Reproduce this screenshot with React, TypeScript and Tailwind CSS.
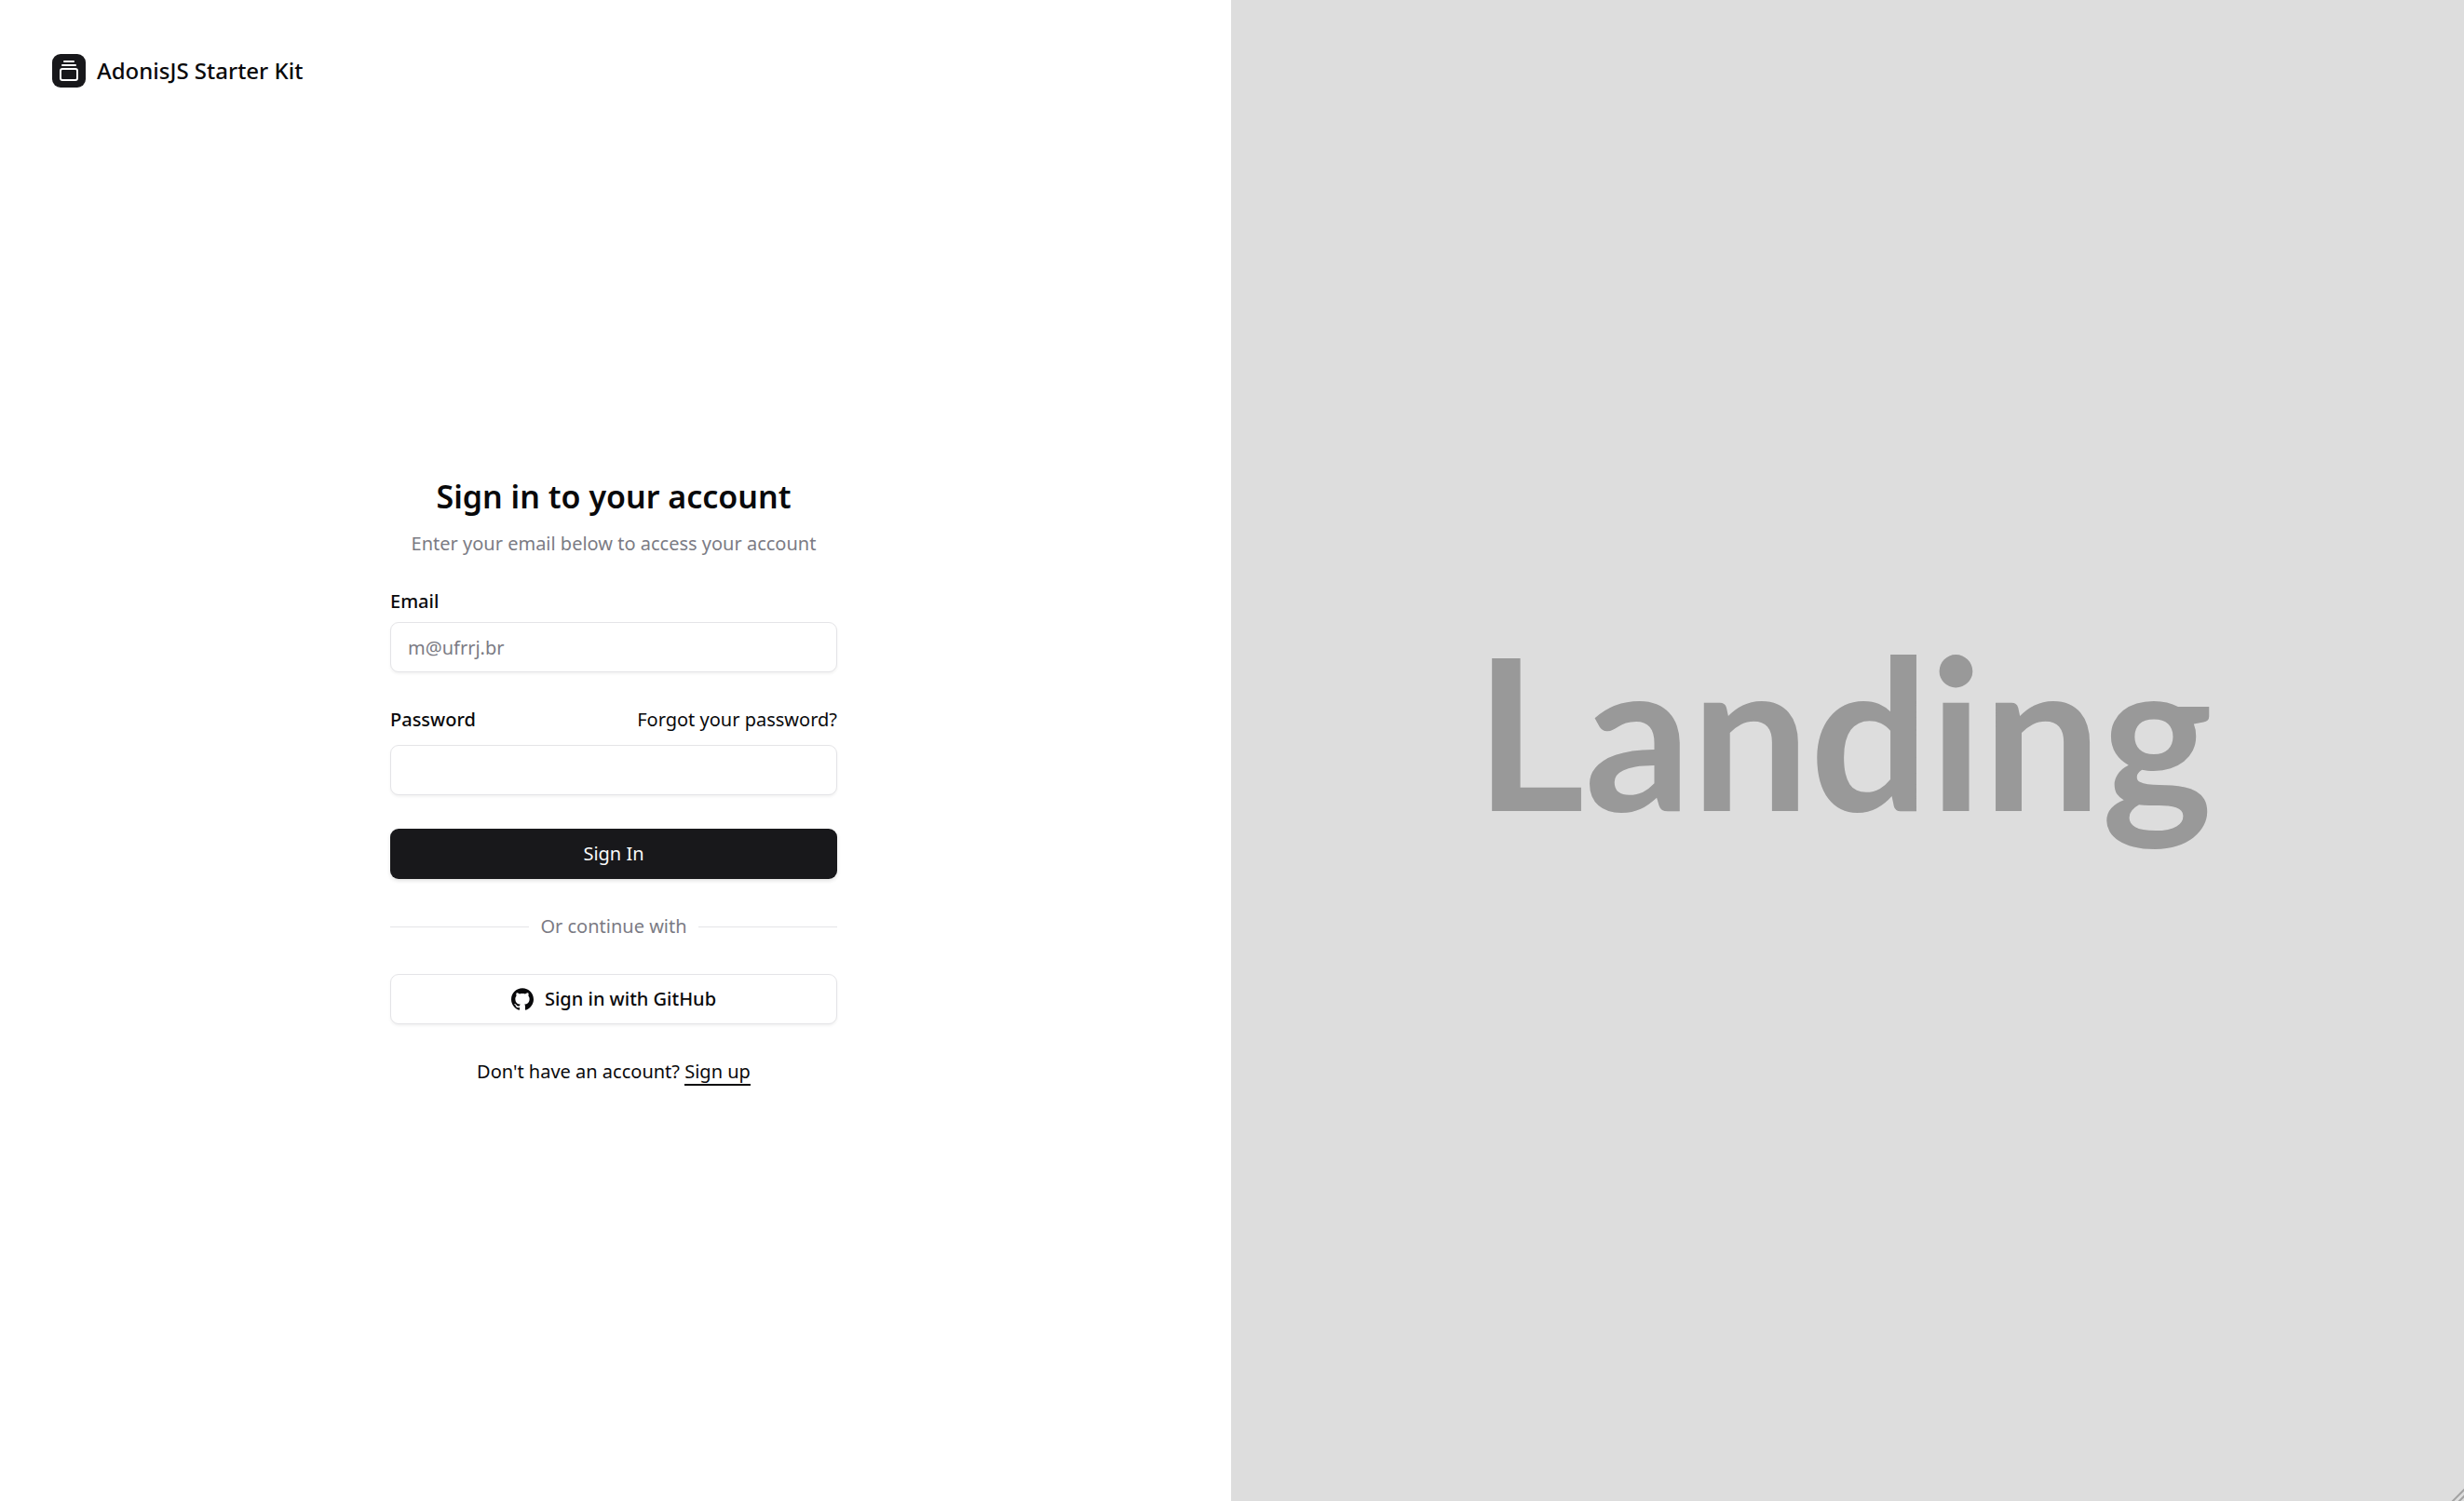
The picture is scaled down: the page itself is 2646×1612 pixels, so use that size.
import React from "react";
import { GalleryVerticalEnd } from "lucide-react";
import { SiGithub } from "react-icons/si";

const field =
  "h-[54px] w-full rounded-[9px] border border-zinc-200 bg-white px-[18px] text-[20px] text-zinc-950 shadow-[0_2px_3px_rgba(0,0,0,0.05)] outline-none placeholder:text-[#7b7b84] focus:border-zinc-400";

function Brand() {
  return (
    <header className="flex">
      <a href="#" className="flex items-center gap-3 text-[24px] leading-9 font-medium">
        <span className="flex size-9 items-center justify-center rounded-[9px] bg-zinc-900 text-white">
          <GalleryVerticalEnd className="size-6" strokeWidth={2} />
        </span>
        AdonisJS Starter Kit
      </a>
    </header>
  );
}

function SignInForm() {
  return (
    <form className="flex w-full max-w-[480px] flex-col gap-9" onSubmit={(e) => e.preventDefault()}>
      <div className="flex flex-col items-center gap-3 text-center">
        <h1 className="text-[34px] leading-[48px] font-semibold">Sign in to your account</h1>
        <p className="text-[#7b7b84]">Enter your email below to access your account</p>
      </div>
      <div className="flex flex-col gap-3">
        <label htmlFor="email" className="leading-[21px] font-medium">
          Email
        </label>
        <input id="email" type="email" placeholder="m@ufrrj.br" className={field} />
      </div>
      <div className="flex flex-col gap-3">
        <div className="flex items-center justify-between">
          <label htmlFor="password" className="font-medium">
            Password
          </label>
          <a href="#">Forgot your password?</a>
        </div>
        <input id="password" type="password" className={field} />
      </div>
      <button
        type="submit"
        className="h-[54px] rounded-[9px] bg-zinc-900 text-zinc-50 shadow-[0_2px_4px_rgba(0,0,0,0.12)]"
      >
        Sign In
      </button>
      <div className="flex items-center gap-3 text-[#7b7b84]">
        <span className="h-px flex-1 bg-zinc-200" />
        Or continue with
        <span className="h-px flex-1 bg-zinc-200" />
      </div>
      <button
        type="button"
        className="flex h-[54px] items-center justify-center gap-3 rounded-[9px] border border-zinc-200 bg-white font-medium shadow-[0_2px_3px_rgba(0,0,0,0.05)]"
      >
        <SiGithub className="size-6" />
        Sign in with GitHub
      </button>
      <p className="text-center">
        Don't have an account?{" "}
        <a href="#" className="border-b-2 border-zinc-950">
          Sign up
        </a>
      </p>
    </form>
  );
}

export default function App() {
  return (
    <div className="grid min-h-screen grid-cols-[1322fr_1324fr] bg-white font-['Noto_Sans',sans-serif] text-[20px] leading-[30px] text-zinc-950">
      <main className="flex flex-col gap-6 pt-[58px] pr-[60px] pb-[55px] pl-14">
        <Brand />
        <div className="flex flex-1 items-center justify-center">
          <SignInForm />
        </div>
      </main>
      <aside className="relative flex items-center justify-center bg-[#dddddd] pr-2 pb-11">
        <span className="font-[Lato,sans-serif] text-[226px] leading-none font-bold text-[#999999]">Landing</span>
        <svg className="absolute right-0 bottom-0 size-[14px]" viewBox="0 0 14 14" stroke="#a3a3a3" strokeWidth="2" aria-hidden="true">
          <path d="M1 15 15 1M8 15 15 8" />
        </svg>
      </aside>
    </div>
  );
}
